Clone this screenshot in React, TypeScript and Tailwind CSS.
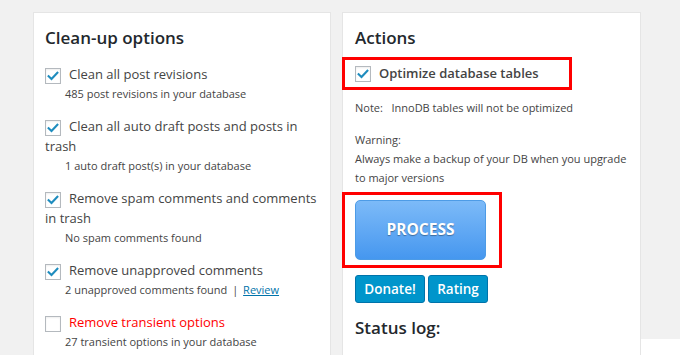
import React from 'react'

const font = { fontFamily: '"Open Sans", "Noto Sans", sans-serif' }

function Check({ checked = true }: { checked?: boolean }) {
  return (
    <span className="inline-block h-[16px] w-[16px] shrink-0 border border-[#b4b9be] bg-white align-middle shadow-[inset_0_1px_2px_rgba(0,0,0,0.07)]">
      {checked && (
        <svg viewBox="0 0 16 16" className="block h-[14px] w-[14px]">
          <path d="M3 8.2 L6.3 11.4 L13 4.4" fill="none" stroke="#1e8cbe" strokeWidth="2.4" strokeLinecap="square" />
        </svg>
      )}
    </span>
  )
}

type Opt = {
  label: string
  sub: React.ReactNode
  checked?: boolean
  red?: boolean
}

const options: Opt[] = [
  { label: 'Clean all post revisions', sub: '485 post revisions in your database' },
  { label: 'Clean all auto draft posts and posts in trash', sub: '1 auto draft post(s) in your database' },
  { label: 'Remove spam comments and comments in trash', sub: 'No spam comments found' },
  {
    label: 'Remove unapproved comments',
    sub: (
      <>
        2 unapproved comments found <span className="mx-[2px]">|</span>{' '}
        <a className="text-[#0073aa] underline">Review</a>
      </>
    ),
  },
  { label: 'Remove transient options', sub: '27 transient options in your database', checked: false, red: true },
]

export default function App() {
  return (
    <div className="flex h-[355px] w-[680px] overflow-hidden bg-white" style={font}>
      <div className="flex h-[355px] w-[641px] shrink-0 gap-[11px] bg-[#f1f1f1] pl-[33px] pt-[12px]">
        <div className="h-[360px] w-[298px] border border-[#e5e5e5] bg-white pl-[11px] pr-[10px] pt-[13px]">
          <h2 className="text-[17px] font-semibold leading-[24px] text-[#23282d]">Clean-up options</h2>
          <div className="mt-[14px] flex flex-col gap-[12px]">
            {options.map((o) => (
              <div key={o.label}>
                <div className={`text-[13px] leading-[20px] ${o.red ? 'text-[#ff0000]' : 'text-[#444]'}`}>
                  <Check checked={o.checked !== false} />
                  <span className="ml-[8px]">{o.label}</span>
                </div>
                <div className="pl-[20px] text-[11px] leading-[20px] text-[#444]">{o.sub}</div>
              </div>
            ))}
          </div>
        </div>

        <div className="h-[360px] w-[299px] border border-[#e5e5e5] bg-white pl-[12px] pr-[4px] pt-[13px]">
          <h2 className="text-[17px] font-semibold leading-[24px] text-[#23282d]">Actions</h2>
          <div className="-ml-[13px] mt-[7px] flex h-[33px] w-[230px] items-center border-[3px] border-[#ff0000] pl-[10px]">
            <Check />
            <span className="ml-[8px] text-[13px] font-semibold text-[#444]">Optimize database tables</span>
          </div>
          <div className="mt-[8px] text-[11px] leading-[20px] text-[#444]">
            Note:&nbsp;&nbsp; InnoDB tables will not be optimized
          </div>
          <div className="mt-[12px] text-[11px] leading-[19px] text-[#444]">
            <div>Warning:</div>
            <div>Always make a backup of your DB when you upgrade to major versions</div>
          </div>
          <div className="-ml-[13px] mt-[5px] flex h-[76px] w-[160px] items-center border-[3px] border-[#ff0000] pl-[10px]">
            <button className="h-[60px] w-[131px] rounded-[5px] border border-[#4d9be6] bg-gradient-to-b from-[#7cbaf8] to-[#4597ef] text-[15.5px] font-bold text-white [text-shadow:0_1px_1px_rgba(0,0,0,0.35)]">
              PROCESS
            </button>
          </div>
          <div className="mt-[7px] flex gap-[3px]">
            <button className="h-[28px] w-[70px] rounded-[3px] border border-[#0073aa] bg-[#0095cb] text-[13.5px] font-semibold text-white">
              Donate!
            </button>
            <button className="h-[28px] w-[60px] rounded-[3px] border border-[#0073aa] bg-[#0095cb] text-[13.5px] font-semibold text-white">
              Rating
            </button>
          </div>
          <h2 className="mt-[13px] text-[17px] font-semibold leading-[24px] text-[#23282d]">Status log:</h2>
        </div>
      </div>
      <div className="h-[339px] flex-1 bg-[#f1f1f1]" />
    </div>
  )
}
